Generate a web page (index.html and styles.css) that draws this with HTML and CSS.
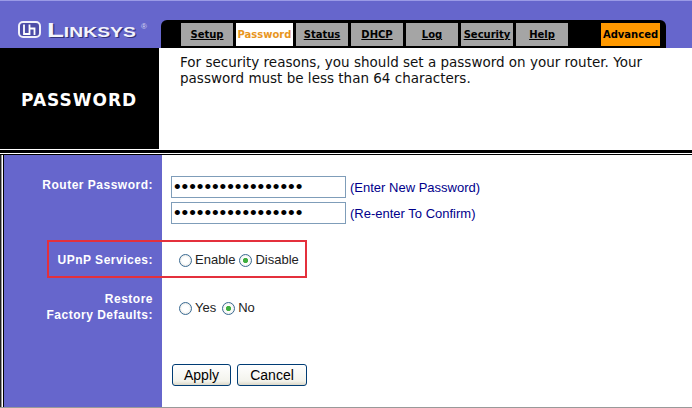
FILE: index.html
```html
<!DOCTYPE html>
<html lang="en">
<head>
    <meta charset="UTF-8">
    <title>Password</title>
    <link rel="stylesheet" href="styles.css">
</head>
<body>
    <div class="topbar">
        <div class="logo">
            <svg class="logo-icon" width="23" height="17" viewBox="0 0 23 17">
                <rect x="1" y="1" width="21" height="15" rx="4" fill="#4c4ca8" stroke="#f0f0fa" stroke-width="2"/>
                <path d="M6 3.500v9.500h5.500V3.500M11.500 7.500h5V14" fill="none" stroke="#fff" stroke-width="1.800"/>
            </svg>
            <span class="logo-text">Linksys</span>
            <span class="logo-reg">®</span>
        </div>
        <div class="tabs">
            <a class="tab" href="#">Setup</a>
            <a class="tab tab-current" href="#">Password</a>
            <a class="tab" href="#">Status</a>
            <a class="tab" href="#">DHCP</a>
            <a class="tab" href="#">Log</a>
            <a class="tab" href="#">Security</a>
            <a class="tab" href="#">Help</a>
            <a class="tab tab-advanced" href="#">Advanced</a>
        </div>
    </div>

    <div class="header">
        <div class="title">PASSWORD</div>
        <p class="intro">For security reasons, you should set a password on your router. Your password must be less than 64 characters.</p>
    </div>

    <div class="rule"></div>

    <div class="main">
        <div class="row row-password">
            <div class="label">Router Password:</div>
            <div class="field">
                <div class="pw-line">
                    <input type="password" value="aaaaaaaaaaaaaaaaa">
                    <span class="hint">(Enter New Password)</span>
                </div>
                <div class="pw-line">
                    <input type="password" value="aaaaaaaaaaaaaaaaa">
                    <span class="hint">(Re-enter To Confirm)</span>
                </div>
            </div>
        </div>

        <div class="row row-upnp">
            <div class="label">UPnP Services:</div>
            <div class="field options">
                <label><input type="radio" name="upnp">Enable</label>
                <label><input type="radio" name="upnp" checked>Disable</label>
            </div>
        </div>

        <div class="row row-restore">
            <div class="label">Restore<br>Factory Defaults:</div>
            <div class="field options">
                <label><input type="radio" name="restore">Yes</label>
                <label><input type="radio" name="restore" checked>No</label>
            </div>
        </div>

        <div class="row row-buttons">
            <div class="label"></div>
            <div class="field buttons">
                <button class="btn-apply">Apply</button>
                <button class="btn-cancel">Cancel</button>
            </div>
        </div>

        <div class="callout"></div>
    </div>
</body>
</html>
```

FILE: styles.css
```css
html, body {
    height: 408px;
    overflow: hidden;
}

body {
    margin: 0;
    font-family: "Liberation Sans", Arial, sans-serif;
    background-color: #fff;
    color: #000;
}

/* top band */
.topbar {
    height: 48px;
    background-color: #6666cc;
    border-top: 1px solid #9a9ae6;
    box-sizing: border-box;
    display: flex;
    align-items: flex-end;
}

.logo {
    width: 161px;
    height: 27px;
    padding: 0 0 0 18px;
    box-sizing: border-box;
    display: flex;
    align-items: flex-start;
}

.logo-text {
    margin-left: 6px;
    width: 93px;
    font-size: 20px;
    line-height: 18px;
    font-variant: small-caps;
    font-weight: bold;
    color: #f4f4fc;
    text-shadow: 1px 1px 0 #34347a;
    transform: scaleX(1.38);
    transform-origin: left;
}

.logo-reg {
    margin-left: 1px;
    font-size: 8px;
    line-height: 12px;
    color: #d8d8f0;
}

.tabs {
    width: 505px;
    height: 28px;
    padding: 3px 0 2px 20px;
    box-sizing: border-box;
    background-color: #000;
    border-radius: 6px 6px 0 0;
    display: flex;
    gap: 3px;
}

.tab {
    width: 52px;
    background-color: #a5a5a5;
    color: #000;
    font: bold 10px "DejaVu Sans", Verdana, sans-serif;
    line-height: 23px;
    text-align: center;
    white-space: nowrap;
}

.tab-current {
    width: 57px;
    background-color: #fff;
    color: #e8961e;
    text-decoration: none;
}

.tab-advanced {
    width: 59px;
    margin-left: 30px;
    background-color: #ff9900;
    text-decoration: none;
}

/* page title */
.header {
    height: 101px;
    display: flex;
}

.title {
    width: 159px;
    background-color: #000;
    color: #fff;
    font: bold 17px "DejaVu Sans", Verdana, sans-serif;
    letter-spacing: 1px;
    line-height: 105px;
    padding-left: 21px;
    box-sizing: border-box;
}

.intro {
    margin: 6px 0 0 21px;
    width: 490px;
    font: 13.5px/16px "DejaVu Sans", Verdana, sans-serif;
    color: #111;
}

.rule {
    margin-top: 1px;
    height: 1px;
    border-top: 3px solid #000;
    border-bottom: 1px solid #000;
    background-color: #fff;
}

/* form */
.main {
    position: relative;
    height: 253px;
    border-bottom: 1px solid #999;
    box-sizing: border-box;
    padding-left: 4px;
    background: linear-gradient(to right, #222 1px, #999 1px 2px, #fff 2px 3px, #000 3px 4px, #6666cc 4px 162px, #fff 162px);
}

.row {
    display: flex;
}

.label {
    width: 149px;
    flex-shrink: 0;
    text-align: right;
    color: #fff;
    font-weight: bold;
    font-size: 12px;
    letter-spacing: 0.5px;
    line-height: 16px;
}

.field {
    margin-left: 18px;
    font-size: 13px;
}

.row-password {
    height: 74px;
    padding-top: 21px;
    box-sizing: border-box;
}

.row-password .label {
    padding-top: 1px;
}

.pw-line {
    display: flex;
    align-items: center;
    gap: 4px;
    height: 22px;
    margin-bottom: 4px;
}

.pw-line input {
    width: 175px;
    height: 22px;
    box-sizing: border-box;
    border: 1px solid #7f9db9;
    padding: 0 2px;
    font: 19px "Liberation Sans", sans-serif;
    letter-spacing: 0.95px;
    outline: none;
}

.hint {
    color: #00008b;
    font-size: 13px;
}

.row-upnp {
    height: 39px;
    padding-top: 23px;
}

.row-restore {
    height: 73px;
}

.row-restore .options {
    padding-top: 9px;
    gap: 6px;
}

.options {
    display: flex;
    align-items: flex-start;
    gap: 4px;
    margin-left: 26px;
    color: #222;
    line-height: 16px;
}

.options label {
    display: flex;
    align-items: center;
}

.options input {
    appearance: none;
    width: 13px;
    height: 13px;
    margin: 0 3px 0 0;
    border: 1px solid #3a6a92;
    border-radius: 50%;
    background: radial-gradient(circle, #fff 40%, #dcdcd6 100%);
    box-sizing: border-box;
}

.options input:checked {
    background: radial-gradient(circle, #3fae3f 0 2.2px, #fff 3px, #e6e6e0 100%);
}

.buttons {
    display: flex;
    gap: 6px;
    margin-left: 19px;
}

.buttons button {
    height: 22px;
    border: 1px solid #003c74;
    border-radius: 3px;
    background: linear-gradient(to bottom, #fff, #f3f3ec 80%, #dcd8c8);
    font: 14px "Liberation Sans", sans-serif;
    color: #000;
    padding: 0;
}

.btn-apply {
    width: 59px;
}

.btn-cancel {
    width: 70px;
}

/* red box drawn over the screenshot */
.callout {
    position: absolute;
    left: 47px;
    top: 85px;
    width: 260px;
    height: 38px;
    box-sizing: border-box;
    border: 2px solid #e4303c;
}
```
